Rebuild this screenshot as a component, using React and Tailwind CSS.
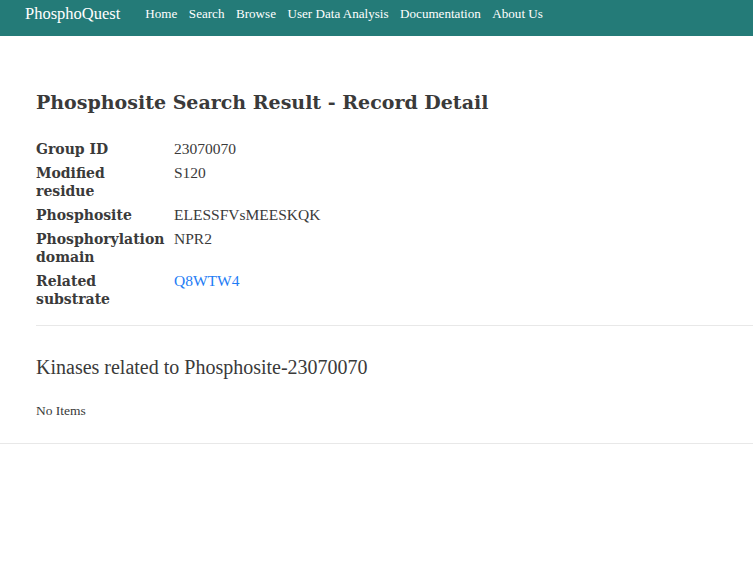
export default function App() {
  const rows = [
    ["Group ID", "23070070"],
    ["Modified residue", "S120"],
    ["Phosphosite", "ELESSFVsMEESKQK"],
    ["Phosphorylation domain", "NPR2"],
    ["Related substrate", "Q8WTW4", true],
  ];
  const nav = ["Home", "Search", "Browse", "User Data Analysis", "Documentation", "About Us"];
  const lib = { fontFamily: '"Liberation Serif", serif' };
  return (
    <div className="min-h-screen bg-white text-[#3a3a3a]" style={{ fontFamily: '"DejaVu Serif", serif' }}>
      <nav className="flex h-[36px] items-start bg-[#247b78] pl-[25px] pt-[4px]" style={lib}>
        <span className="text-[16.5px] leading-[20px] text-white">PhosphoQuest</span>
        <div className="ml-[25px] mt-[1px] flex gap-[11.5px]">
          {nav.map((n) => (
            <a key={n} className="text-[13.1px] leading-[17px] text-white">{n}</a>
          ))}
        </div>
      </nav>
      <div className="px-[36px] pt-[52px]">
        <h1 className="text-[19px] font-bold leading-[28px] text-[#3a3a3a]">Phosphosite Search Result - Record Detail</h1>
        <table className="mt-[21px] leading-[18px]">
          <tbody>
            {rows.map(([k, v, link]) => (
              <tr key={k}>
                <th className="py-[3px] pr-[8px] text-left align-top text-[14px] font-bold">
                  <div className="w-[130px]">{k}</div>
                </th>
                <td className="py-[3px] align-top text-[15.5px]" style={lib}>
                  {link ? <a className="text-[#1e7cf5]">{v}</a> : v}
                </td>
              </tr>
            ))}
          </tbody>
        </table>
      </div>
      <div className="ml-[36px] mt-[14px] border-t border-[#e8e8e8]" />
      <div className="px-[36px] pt-[29px]" style={lib}>
        <h2 className="text-[20px] leading-[24px]">Kinases related to Phosphosite-23070070</h2>
        <p className="mt-[22px] text-[13.5px]">No Items</p>
      </div>
      <div className="mt-[22px] border-t border-[#e8e8e8]" />
    </div>
  );
}
